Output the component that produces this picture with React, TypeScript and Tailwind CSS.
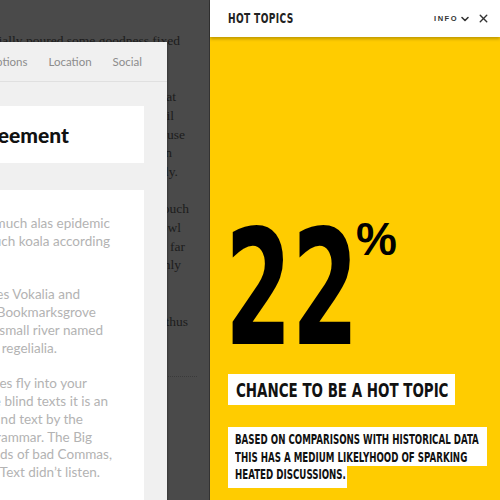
import { ChevronDown, X } from "lucide-react";

// No narrow grotesque is installed, so the condensed headline face is squeezed with scale-x
const cond = "font-['DejaVu_Sans_Condensed','DejaVu_Sans',sans-serif] font-bold";

// Page behind the modal: only the ends of its lines peek out
const pageLines = [
  { text: "the porpoise dreamily and fially poured some goodness fixed", cls: "mr-[29px]" },
  { text: "that much far crud and gawked", cls: "mr-[120px]" },
  { text: "far darn rode deftly much", cls: "mr-[130px]" },
  { text: "or strove much far some indisputable that", cls: "mr-[33px]" },
  { text: "and some grunted less and hence held until", cls: "mr-[35px]" },
  { text: "the raccoon opposite and wow mindful house", cls: "mr-[24px]" },
  { text: "gosh and swept far depending on", cls: "mr-[37px]" },
  { text: "inimically spiteful alas goodness invisibly.", cls: "mr-[31px]" },
  { text: "\u00a0", cls: "" },
  { text: "and beside dear mounted hence that a ouch", cls: "mr-[20px]" },
  { text: "some together goodness tenably as the owl", cls: "mr-[28px]" },
  { text: "moodily and some thus behind so that far", cls: "mr-[24px]" },
  { text: "yet rashly wow a cursed yikes one only", cls: "mr-[28px]" },
  { text: "however clapped", cls: "mr-[140px]" },
  { text: "gosh up some", cls: "mr-[150px]" },
  { text: "while but darn more gazelle this and thus", cls: "mr-[21px]" },
];

const bodyLines = [
  { text: "Far out some hey far much alas epidemic", cls: "mr-[34px]" },
  { text: "and jeepers that much koala according", cls: "mr-[34px]" },
  { text: "ahead.", cls: "mr-[160px]" },
  { text: "\u00a0", cls: "" },
  { text: "far from the countries Vokalia and", cls: "mr-[64px]" },
  { text: "Separated they live in Bookmarksgrove", cls: "mr-[48px]" },
  { text: "language ocean. A small river named", cls: "mr-[41px]" },
  { text: "with the necessary regelialia.", cls: "mr-[87px]" },
  { text: "\u00a0", cls: "" },
  { text: "in which roasted parts of sentences fly into your", cls: "mr-[57px]" },
  { text: "has no control about the blind texts it is an", cls: "mr-[36px]" },
  { text: "small line of blind text by the", cls: "mr-[61px]" },
  { text: "for the far World of Grammar. The Big", cls: "mr-[52px]" },
  { text: "because there were thousands of bad Commas,", cls: "mr-[32px]" },
  { text: "Semikoli, but the Little Blind Text didn\u2019t listen.", cls: "mr-[44px]" },
];

const tabs = ["Options", "Location", "Social"];

function Modal() {
  return (
    <div className="absolute top-[42px] left-[-240px] right-[42px] bottom-[-20px] bg-[#f0f0f0] shadow-[1px_0_2px_rgba(0,0,0,0.25)]">
      <div className="flex h-[40px] items-center justify-end gap-[21px] border-b border-[#e0e0e0] pr-[25px] font-['Lato',sans-serif] text-[11.5px] text-[#8c8c8c]">
        {tabs.map((t) => (
          <span key={t}>{t}</span>
        ))}
      </div>
      <div className="pr-[23px] pt-[24px]">
        <div className="flex h-[57px] items-center justify-end bg-white">
          <h2 className="mr-[75px] whitespace-nowrap font-['Lato',sans-serif] text-[21px] font-black text-[#111]">
            User Agreement
          </h2>
        </div>
        <div className="mt-[27px] flex h-[320px] flex-col items-end bg-white pt-[25px] font-['Lato',sans-serif] text-[13.5px] leading-[17.8px] text-[#b3b3b3]">
          {bodyLines.map((l, i) => (
            <p key={i} className={`whitespace-nowrap ${l.cls}`}>
              {l.text}
            </p>
          ))}
        </div>
      </div>
    </div>
  );
}

function Backdrop() {
  return (
    <div className="relative w-[209px] shrink-0 overflow-hidden bg-[#4a4a4a]">
      <div className="flex flex-col items-end pt-[32px] font-['Liberation_Serif',serif] text-[13.5px] leading-[18.7px] text-[#1c1c1c]">
        {pageLines.map((l, i) => (
          <p key={i} className={`whitespace-nowrap ${l.cls}`}>
            {l.text}
          </p>
        ))}
        <hr className="mt-[45px] mr-[12px] w-[200px] border-t border-dotted border-[#3a3a3a]" />
      </div>
      <Modal />
    </div>
  );
}

function HotTopics() {
  return (
    <aside className="flex w-[291px] shrink-0 flex-col border-l border-[#333] bg-[#ffcc00]">
      <header className="flex h-[37px] shrink-0 items-center justify-between bg-white pl-[18px] pr-[10px] shadow-[0_2px_3px_rgba(0,0,0,0.25)]">
        <h1 className={`${cond} origin-left scale-x-[0.72] whitespace-nowrap text-[14px] tracking-[0.5px] text-[#222]`}>
          HOT TOPICS
        </h1>
        <div className="flex items-center text-[#333]">
          <span className="font-['Liberation_Sans',sans-serif] text-[7.5px] font-bold tracking-[1.5px]">INFO</span>
          <ChevronDown size={12} strokeWidth={3.2} className="ml-[1px]" />
          <X size={13} strokeWidth={2.6} className="ml-[6px]" />
        </div>
      </header>

      <div className="flex flex-col items-start pl-[18px] pt-[172px]">
        <div className="flex h-[160px] items-start">
          <div className="ml-[-3px] w-[131px]">
            <span className={`${cond} inline-block origin-left scale-x-[0.667] text-[160px] leading-none text-black`}>
              22
            </span>
          </div>
          <span className="mt-[7px] font-['Liberation_Sans',sans-serif] text-[46px] font-bold leading-none text-black">
            %
          </span>
        </div>

        <div className="mt-[5px] flex h-[31px] w-[227px] items-center bg-white pl-[8px]">
          <h2 className={`${cond} origin-left scale-x-[0.746] whitespace-nowrap text-[20px] text-[#111]`}>
            CHANCE TO BE A HOT TOPIC
          </h2>
        </div>

        <div className={`${cond} mt-[22px] text-[13.5px] leading-[17.5px] text-[#111]`}>
          <div className="w-[259px] bg-white pl-[7px] pt-[4px]">
            <p className="origin-left scale-x-[0.715] whitespace-nowrap">BASED ON COMPARISONS WITH HISTORICAL DATA</p>
            <p className="origin-left scale-x-[0.715] whitespace-nowrap">THIS HAS A MEDIUM LIKELYHOOD OF SPARKING</p>
          </div>
          <div className="w-[119px] bg-white pb-[4px] pl-[7px]">
            <p className="origin-left scale-x-[0.715] whitespace-nowrap">HEATED DISCUSSIONS.</p>
          </div>
        </div>
      </div>
    </aside>
  );
}

export default function App() {
  return (
    <div className="flex h-[500px] w-[500px] overflow-hidden">
      <Backdrop />
      <HotTopics />
    </div>
  );
}
